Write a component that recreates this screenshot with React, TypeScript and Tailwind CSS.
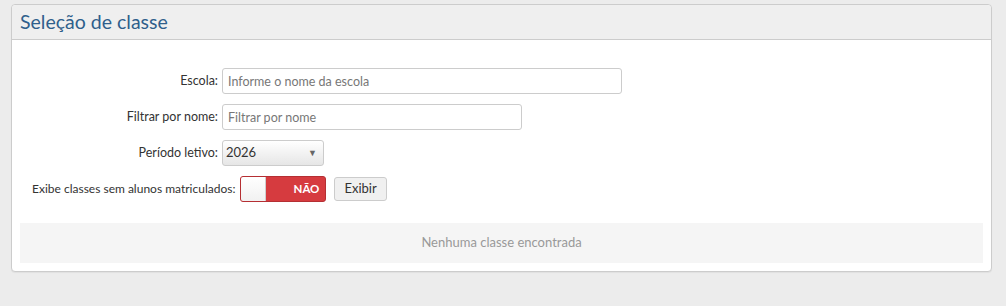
import React from 'react';

const font = { fontFamily: 'Lato, "Open Sans", sans-serif' };

function Label({ children }: { children: React.ReactNode }) {
  return (
    <label className="w-[202px] shrink-0 pr-[4px] text-right text-[12.5px] text-[#333] whitespace-nowrap">
      {children}
    </label>
  );
}

export default function App() {
  const [showEmpty, setShowEmpty] = React.useState(false);

  return (
    <div className="min-h-[306px] w-[1006px] bg-[#ececec] pt-[4px] pl-[11px]" style={font}>
      <div className="w-[981px] rounded-[4px] border border-[#cccccc] bg-white shadow-[0_1px_1px_rgba(0,0,0,0.05)]">
        <div className="flex h-[35px] items-center rounded-t-[4px] border-b border-[#cccccc] bg-[#efefef] pl-[8px]">
          <h2 className="text-[19.5px] leading-none font-normal text-[#2f5f8c]">Seleção de classe</h2>
        </div>

        <div className="px-[8px] pt-[28px] pb-[8px]">
          <div className="flex flex-col gap-[10px]">
            <div className="flex items-center">
              <Label>Escola:</Label>
              <input
                className="h-[26px] w-[400px] rounded-[3px] border border-[#cccccc] px-[5px] text-[12.5px] text-[#333] placeholder:text-[#777] outline-none"
                placeholder="Informe o nome da escola"
              />
            </div>

            <div className="flex items-center">
              <Label>Filtrar por nome:</Label>
              <input
                className="h-[26px] w-[300px] rounded-[3px] border border-[#cccccc] px-[5px] text-[12.5px] text-[#333] placeholder:text-[#777] outline-none"
                placeholder="Filtrar por nome"
              />
            </div>

            <div className="flex items-center">
              <Label>Período letivo:</Label>
              <div className="flex h-[26px] w-[102px] items-center justify-between rounded-[3px] border border-[#cccccc] bg-gradient-to-b from-white to-[#e6e6e6] pr-[6px] pl-[3px] text-[13px] text-[#333]">
                <span>2026</span>
                <span className="text-[9px] text-[#666]">▼</span>
              </div>
            </div>

            <div className="flex items-center pl-[12px]">
              <label className="pr-[5px] text-[12px] text-[#333] whitespace-nowrap">
                Exibe classes sem alunos matriculados:
              </label>
              <button
                onClick={() => setShowEmpty(!showEmpty)}
                className="flex h-[26px] w-[86px] items-center rounded-[3px] border border-[#b52f33] bg-[#d63b3f] p-0"
              >
                <span className="h-[24px] w-[25px] rounded-l-[2px] border-r border-[#cfcfcf] bg-gradient-to-b from-white to-[#f1f1f1]" />
                <span className="flex-1 pr-[6px] text-right text-[11.5px] font-bold text-white">NÃO</span>
              </button>
              <button className="ml-[8px] h-[24px] rounded-[3px] border border-[#cccccc] bg-[#f0f0f0] px-[9px] text-[13px] text-[#333]">
                Exibir
              </button>
            </div>
          </div>

          <div className="mt-[21px] flex h-[40px] items-center justify-center bg-[#f5f5f5] text-[13px] text-[#999]">
            Nenhuma classe encontrada
          </div>
        </div>
      </div>
    </div>
  );
}
